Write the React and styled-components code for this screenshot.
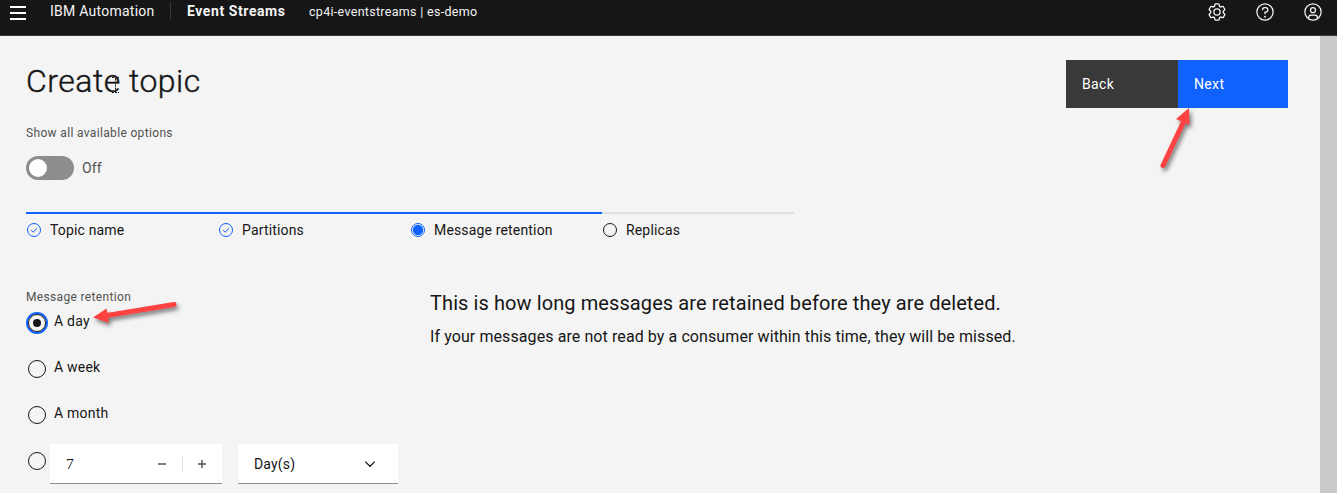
import React from "react";
import styled, { createGlobalStyle, css } from "styled-components";

const GlobalStyle = createGlobalStyle`
  * { box-sizing: border-box; }
  body {
    margin: 0;
    background: #f4f4f4;
    color: #161616;
    font: 400 14px/18px Roboto, "Liberation Sans", sans-serif;
    letter-spacing: 0.16px;
    overflow: hidden;
  }
  button, input { font: inherit; letter-spacing: inherit; color: inherit; }
  svg { display: block; flex: none; }
`;

const Page = styled.div`
  position: relative;
  display: flex;
  flex-direction: column;
  height: 493px;
`;

const Header = styled.header`
  display: flex;
  flex: none;
  align-items: flex-start;
  height: 36px;
  padding: 0 14px 0 10px;
  background: #161616;
  border-bottom: 1px solid #393939;
  color: #f4f4f4;
`;

const MenuButton = styled.button`
  display: flex;
  flex-direction: column;
  gap: 4px;
  width: 16px;
  margin: 6px 24px 0 0;
  padding: 0;
  border: 0;
  background: none;
`;

const MenuBar = styled.span`
  height: 2px;
  background: #fff;
`;

const Brand = styled.span`
  width: 120px;
  padding-top: 2px;
  letter-spacing: 0.25px;
`;

const Divider = styled.span`
  width: 1px;
  height: 18px;
  margin: 2px 16px 0 0;
  background: #393939;
`;

const Product = styled.strong`
  width: 122px;
  padding-top: 2px;
  font-weight: 700;
  letter-spacing: 0.58px;
`;

const Instance = styled.span`
  padding-top: 3px;
  font-size: 12.5px;
  letter-spacing: 0.3px;
`;

const HeaderActions = styled.nav`
  display: flex;
  gap: 28px;
  margin: 2px 0 0 auto;
`;

const Body = styled.div`
  display: flex;
  flex: 1;
  min-height: 0;
`;

const Main = styled.main`
  flex: 1;
  padding: 24px 32px 0 26px;
`;

const ScrollTrack = styled.div`
  width: 17px;
  background: #cacaca;
`;

const TitleRow = styled.div`
  display: flex;
  justify-content: space-between;
  height: 66px;
`;

const Title = styled.h1`
  margin: 1px 0 0;
  font-size: 32px;
  font-weight: 300;
  line-height: 40px;
  letter-spacing: 0.48px;
  -webkit-text-stroke: 0.4px #161616;
`;

const ButtonSet = styled.div`
  display: flex;
  height: 48px;
`;

const ActionButton = styled.button`
  padding: 0 16px;
  border: 0;
  text-align: left;
  color: #fff;
  letter-spacing: 0.35px;
  ${({ $primary }) =>
    $primary
      ? css`
          width: 110px;
          background: #0f62fe;
        `
      : css`
          width: 112px;
          background: #393939;
        `}
`;

const FieldLabel = styled.div`
  height: 14px;
  font-size: 12px;
  line-height: 14px;
  letter-spacing: 0.34px;
  color: #525252;
`;

const ToggleRow = styled.div`
  display: flex;
  align-items: center;
  gap: 8px;
  height: 24px;
  margin: 16px 0 32px;
  color: #525252;
`;

const Toggle = styled.button`
  width: 48px;
  height: 24px;
  padding: 3px;
  border: 0;
  border-radius: 12px;
  background: #8d8d8d;
`;

const Knob = styled.span`
  display: block;
  width: 18px;
  height: 18px;
  border-radius: 50%;
  background: #fff;
`;

const Steps = styled.ol`
  display: flex;
  margin: 0;
  padding: 0;
  list-style: none;
`;

const Step = styled.li`
  display: flex;
  align-items: center;
  gap: 8px;
  width: 192px;
  height: 29px;
  padding: 5px 0 0;
  border-top: 2px solid ${({ $reached }) => ($reached ? "#0f62fe" : "#e0e0e0")};
`;

const Columns = styled.div`
  display: flex;
  margin-top: 49px;
`;

const Options = styled.section`
  display: flex;
  flex-direction: column;
  width: 404px;
`;

const Radios = styled.div`
  display: flex;
  flex-direction: column;
  gap: 24px;
  margin-top: 8px;
`;

const RadioRow = styled.label`
  display: flex;
  align-items: flex-start;
  gap: 7px;
  height: 22px;
`;

const RadioText = styled.span`
  letter-spacing: 0.22px;
`;

const RadioDot = styled.span`
  display: grid;
  place-items: center;
  flex: none;
  width: 18px;
  height: 18px;
  margin: 2px 1px 0 2px;
  border: 1px solid #161616;
  border-radius: 50%;
  ${({ $selected }) =>
    $selected &&
    css`
      box-shadow: 0 0 0 2px #0f62fe;
      &::after {
        content: "";
        width: 8px;
        height: 8px;
        border-radius: 50%;
        background: #161616;
      }
    `}
`;

const CustomRow = styled.div`
  display: flex;
  margin-top: -6px;
`;

const CustomRadio = styled.div`
  width: 24px;
  padding-top: 6px;
`;

const Field = styled.div`
  display: flex;
  align-items: center;
  width: ${({ $width }) => $width}px;
  height: 40px;
  margin-right: 16px;
  padding: 0 ${({ $end }) => $end}px 0 16px;
  border-bottom: 1px solid #8d8d8d;
  background: #fff;
`;

const FieldValue = styled.span`
  flex: 1;
  padding-top: 1px;
`;

const NumberValue = styled(FieldValue)`
  font-family: "Liberation Serif", serif;
  font-size: 15.5px;
`;

const StepperRule = styled.span`
  width: 1px;
  height: 16px;
  margin: 0 15px 0 16px;
  background: #e0e0e0;
`;

const Help = styled.section`
  padding-top: 1px;
`;

const HelpTitle = styled.h2`
  margin: 0;
  font-size: 20px;
  font-weight: 400;
  line-height: 24px;
  letter-spacing: 0.09px;
`;

const HelpText = styled.p`
  margin: 11px 0 0;
  font-size: 16px;
  line-height: 22px;
  letter-spacing: 0.09px;
`;

const Pointer = styled.svg`
  position: absolute;
  left: ${({ $x }) => $x}px;
  top: ${({ $y }) => $y}px;
  overflow: visible;
  pointer-events: none;
  ${({ $shadow }) => $shadow && "filter: drop-shadow(2px 3px 2px rgba(0, 0, 0, 0.5));"}
`;

const Icon = ({ size = 20, fill = "#f4f4f4", children }) => (
  <svg width={size} height={size} viewBox="0 0 32 32" fill={fill}>
    {children}
  </svg>
);

const SettingsIcon = () => (
  <Icon>
    <path d="M27,16.76c0-.25,0-.5,0-.76s0-.51,0-.77l1.92-1.68A2,2,0,0,0,29.3,11L26.94,7a2,2,0,0,0-1.73-1,2,2,0,0,0-.64.1l-2.43.82a11.35,11.35,0,0,0-1.31-.75l-.51-2.52a2,2,0,0,0-2-1.61H13.64a2,2,0,0,0-2,1.61l-.51,2.52a11.48,11.48,0,0,0-1.32.75L7.43,6.06A2,2,0,0,0,6.79,6,2,2,0,0,0,5.06,7L2.7,11a2,2,0,0,0,.41,2.51L5,15.24c0,.25,0,.5,0,.76s0,.51,0,.77L3.11,18.45A2,2,0,0,0,2.7,21L5.06,25a2,2,0,0,0,1.73,1,2,2,0,0,0,.64-.1l2.43-.82a11.35,11.35,0,0,0,1.31.75l.51,2.52a2,2,0,0,0,2,1.61h4.72a2,2,0,0,0,2-1.61l.51-2.52a11.48,11.48,0,0,0,1.32-.75l2.42.82a2,2,0,0,0,.64.1,2,2,0,0,0,1.73-1L29.3,21a2,2,0,0,0-.41-2.51ZM25.21,24l-3.43-1.16a8.86,8.86,0,0,1-2.71,1.57L18.36,28H13.64l-.71-3.55a9.36,9.36,0,0,1-2.7-1.57L6.79,24,4.43,20l2.72-2.4a8.9,8.9,0,0,1,0-3.13L4.43,12,6.79,8l3.43,1.16a8.86,8.86,0,0,1,2.71-1.57L13.64,4h4.72l.71,3.55a9.36,9.36,0,0,1,2.7,1.57L25.21,8,27.57,12l-2.72,2.4a8.9,8.9,0,0,1,0,3.13L27.57,20Z" />
    <path d="M16,22a6,6,0,1,1,6-6A5.94,5.94,0,0,1,16,22Zm0-10a3.91,3.91,0,0,0-4,4,3.91,3.91,0,0,0,4,4,3.91,3.91,0,0,0,4-4A3.91,3.91,0,0,0,16,12Z" />
  </Icon>
);

const HelpIcon = () => (
  <Icon>
    <circle cx="16" cy="16" r="13" fill="none" stroke="#f4f4f4" strokeWidth="2" />
    <circle cx="16" cy="23.5" r="1.5" />
    <path d="M17,8H15.5A4.49,4.49,0,0,0,11,12.5V13h2v-.5A2.5,2.5,0,0,1,15.5,10H17a2.5,2.5,0,0,1,0,5H15v4.5h2V17a4.5,4.5,0,0,0,0-9Z" />
  </Icon>
);

const UserIcon = () => (
  <Icon>
    <path d="M16,8a5,5,0,1,0,5,5A5,5,0,0,0,16,8Zm0,8a3,3,0,1,1,3-3A3,3,0,0,1,16,16Z" />
    <path d="M16,2A14,14,0,1,0,30,16,14,14,0,0,0,16,2ZM10,26.38V25a3,3,0,0,1,3-3h6a3,3,0,0,1,3,3v1.38a11.9,11.9,0,0,1-12,0Zm14-1.45A5,5,0,0,0,19,20H13a5,5,0,0,0-5,4.93,12,12,0,1,1,16,0Z" />
  </Icon>
);

const StepIcon = ({ state }) => (
  <svg width="16" height="16" viewBox="0 0 16 16" fill="none">
    <circle cx="8" cy="8" r="6.5" stroke={state === "todo" ? "#161616" : "#0f62fe"} />
    {state === "done" && <path d="M5 8.1 7.1 10.2 11 6.3" stroke="#0f62fe" />}
    {state === "current" && <circle cx="8" cy="8" r="5.2" fill="#0f62fe" />}
  </svg>
);

const steps = [
  { name: "Topic name", state: "done" },
  { name: "Partitions", state: "done" },
  { name: "Message retention", state: "current" },
  { name: "Replicas", state: "todo" },
];

const periods = ["A day", "A week", "A month"];

export default function App() {
  return (
    <Page>
      <GlobalStyle />
      <Header>
        <MenuButton aria-label="Menu">
          <MenuBar />
          <MenuBar />
          <MenuBar />
        </MenuButton>
        <Brand>IBM Automation</Brand>
        <Divider />
        <Product>Event Streams</Product>
        <Instance>cp4i-eventstreams | es-demo</Instance>
        <HeaderActions>
          <SettingsIcon />
          <HelpIcon />
          <UserIcon />
        </HeaderActions>
      </Header>
      <Body>
        <Main>
          <TitleRow>
            <Title>Create topic</Title>
            <ButtonSet>
              <ActionButton>Back</ActionButton>
              <ActionButton $primary>Next</ActionButton>
            </ButtonSet>
          </TitleRow>
          <FieldLabel>Show all available options</FieldLabel>
          <ToggleRow>
            <Toggle aria-label="Show all available options">
              <Knob />
            </Toggle>
            Off
          </ToggleRow>
          <Steps>
            {steps.map(({ name, state }) => (
              <Step key={name} $reached={state !== "todo"}>
                <StepIcon state={state} />
                {name}
              </Step>
            ))}
          </Steps>
          <Columns>
            <Options>
              <FieldLabel>Message retention</FieldLabel>
              <Radios>
                {periods.map((period, i) => (
                  <RadioRow key={period}>
                    <RadioDot $selected={i === 0} />
                    <RadioText>{period}</RadioText>
                  </RadioRow>
                ))}
                <CustomRow>
                  <CustomRadio>
                    <RadioDot />
                  </CustomRadio>
                  <Field $width={172} $end={16}>
                    <NumberValue>7</NumberValue>
                    <svg width="8" height="10" stroke="#525252" strokeWidth="1.5">
                      <path d="M0 5H8" />
                    </svg>
                    <StepperRule />
                    <svg width="8" height="10" stroke="#525252" strokeWidth="1.5">
                      <path d="M0 5H8M4 1V9" />
                    </svg>
                  </Field>
                  <Field $width={160} $end={22}>
                    <FieldValue>Day(s)</FieldValue>
                    <svg width="12" height="8" fill="none" stroke="#161616" strokeWidth="1.2">
                      <path d="M1.2 1.6 6 6.3 10.8 1.6" />
                    </svg>
                  </Field>
                </CustomRow>
              </Radios>
            </Options>
            <Help>
              <HelpTitle>This is how long messages are retained before they are deleted.</HelpTitle>
              <HelpText>If your messages are not read by a consumer within this time, they will be missed.</HelpText>
            </Help>
          </Columns>
        </Main>
        <ScrollTrack />
      </Body>
      <Pointer $x={111} $y={77} width="9" height="17" fill="none" stroke="#161616">
        <path d="M1 .5H3.5L4.5 1.5 5.5 .5H8M4.5 1.5V15M1 15.5H8" strokeDasharray="2 1" />
      </Pointer>
      <Pointer $shadow $x={1160} $y={108} width="32" height="62">
        <path d="M3 57.5 23 15" stroke="#ff4343" strokeWidth="5" strokeLinecap="round" />
        <path d="M29 0 16 11 29.5 17Z" fill="#ff4343" />
      </Pointer>
      <Pointer $shadow $x={93} $y={300} width="84" height="24">
        <path d="M81 4.5 14 15.5" stroke="#ff4343" strokeWidth="5" strokeLinecap="round" />
        <path d="M0 17.5 13.5 8.5 16 23Z" fill="#ff4343" />
      </Pointer>
    </Page>
  );
}
